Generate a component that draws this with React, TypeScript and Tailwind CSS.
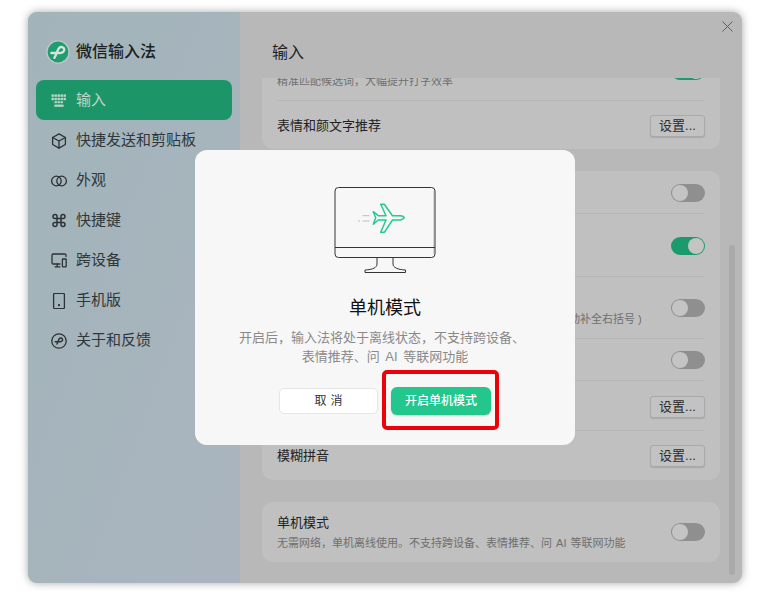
import React from "react";

const FONT = "font-['Liberation_Sans','Noto_Sans_CJK_SC',sans-serif]";

function Toggle({ on = false, className = "" }: { on?: boolean; className?: string }) {
  return on ? (
    <div className={`flex h-[18px] w-[34px] shrink-0 items-center justify-end rounded-full bg-[#1b9a6b] ${className}`}>
      <div className="h-[16px] w-[16px] rounded-full bg-[#c4c4c4] mr-[1px]" />
    </div>
  ) : (
    <div className={`flex h-[18px] w-[34px] shrink-0 items-center rounded-full bg-[#8f8f8f] ${className}`}>
      <div className="h-[16px] w-[16px] rounded-full bg-[#c4c4c4] ml-[1px]" />
    </div>
  );
}

function SetBtn() {
  return (
    <div className="flex h-[22px] w-[55px] shrink-0 items-center justify-center rounded-[3px] border border-[#a9a9a9] bg-[#c2c2c2] text-[13px] text-[#2a2a2a] shadow-[0_1px_1px_rgba(0,0,0,0.12)]">
      设置...
    </div>
  );
}

function Row({ h, border = true, children }: { h: string; border?: boolean; children: React.ReactNode }) {
  return (
    <div className={`flex items-center justify-between ${h} ${border ? "border-b border-[#b6b6b6]" : ""}`}>{children}</div>
  );
}

const stroke = { fill: "none", stroke: "#2c3235", strokeWidth: 1.3, strokeLinecap: "round", strokeLinejoin: "round" } as const;

function KeyboardIcon() {
  return (
    <svg width="16" height="14" viewBox="0 0 16 14" fill="#bcd6c9">
      {[0, 3, 6, 9, 12].map((x) => (
        <rect key={`a${x}`} x={x + 0.5} y="0.4" width="2.4" height="2.4" />
      ))}
      {[0, 3, 6, 9, 12].map((x) => (
        <rect key={`b${x}`} x={x + 0.5} y="3.8" width="2.4" height="2.4" />
      ))}
      {[3, 6, 9].map((x) => (
        <rect key={`c${x}`} x={x + 0.5} y="7.2" width="2.4" height="2" />
      ))}
      <rect x="3.4" y="10.6" width="9.2" height="2.2" />
    </svg>
  );
}
function CubeIcon() {
  return (
    <svg width="16" height="16" viewBox="0 0 16 16" {...stroke}>
      <path d="M8 0.9 14.4 4.5V11.5L8 15.1 1.6 11.5V4.5Z" />
      <path d="M1.6 4.5 8 8 14.4 4.5M8 8V15.1" />
    </svg>
  );
}
function RingsIcon() {
  return (
    <svg width="16" height="12" viewBox="0 0 16 12" {...stroke}>
      <circle cx="5.4" cy="6" r="4.8" />
      <circle cx="10.6" cy="6" r="4.8" />
    </svg>
  );
}
function CmdIcon() {
  return (
    <svg width="17" height="17" viewBox="0 0 24 24" fill="none" stroke="#2c3235" strokeWidth="2.2" strokeLinecap="round" strokeLinejoin="round">
      <path d="M15 6v12a3 3 0 1 0 3-3H6a3 3 0 1 0 3 3V6a3 3 0 1 0-3 3h12a3 3 0 1 0-3-3" />
    </svg>
  );
}
function DevicesIcon() {
  return (
    <svg width="16" height="15" viewBox="0 0 16 15" {...stroke}>
      <path d="M15 3.4V2.2A1.2 1.2 0 0 0 13.8 1H2.2A1.2 1.2 0 0 0 1 2.2V9.8A1.2 1.2 0 0 0 2.2 11H9" />
      <path d="M4 13.8H9M6.2 11V13.8" />
      <rect x="11.4" y="6" width="3.8" height="7.8" rx="0.6" />
    </svg>
  );
}
function PhoneIcon() {
  return (
    <svg width="16" height="16" viewBox="0 0 16 16" {...stroke}>
      <rect x="2.6" y="0.4" width="10.8" height="15.2" rx="1.2" />
      <circle cx="8" cy="12.2" r="0.5" fill="#2c3235" />
    </svg>
  );
}
function AboutIcon() {
  return (
    <svg width="16" height="16" viewBox="0 0 16 16" {...stroke}>
      <circle cx="8" cy="8" r="7.2" />
      <path d="M4.2 8.8H8.8C10.8 8.8 11.8 7.6 11.5 6.4 11.1 5 9.4 4.6 8.4 5.6 7.6 6.4 7.4 8.2 6 11" strokeWidth="1.5" />
    </svg>
  );
}
function Logo() {
  return (
    <svg width="24" height="24" viewBox="0 0 24 24">
      <circle cx="12" cy="12" r="11.8" fill="#bfc6c5" />
      <circle cx="12" cy="12" r="10.4" fill="#1f9d70" />
      <path d="M5.4 13H13C16.4 13 18.6 11.4 18.2 9.2 17.8 7 15 6.2 13.2 7.8 11.4 9.4 11.2 13 8.4 17.8" fill="none" stroke="#d4e3dc" strokeWidth="2.4" strokeLinecap="round" strokeLinejoin="round" />
    </svg>
  );
}

function MonitorArt() {
  return (
    <svg width="102" height="88" viewBox="0 0 102 88" className="block">
      <rect x="1" y="0.5" width="100" height="70" rx="3.5" fill="none" stroke="#343434" strokeWidth="1" />
      <path d="M100.5 4V67" stroke="#8f8f8f" strokeWidth="1.6" />
      <path d="M1 60.5H101" stroke="#343434" strokeWidth="1" />
      <path d="M43 70.5V77C43 80.5 39 82.6 31 83V85.5H71.5V83C63.5 82.6 59 80.5 59 77V70.5" fill="none" stroke="#343434" strokeWidth="1" />
      <path
        d="M70.3 30.7Q69 28.7 66.5 28.7H58.5L50.3 17.3H46.7L52 28.7H44.3L39.3 24.7 41.7 30.7 39.3 37.3 44.3 33H52L46.7 45.3H50.3L58.5 33H66.5Q69 32.7 70.3 30.7Z"
        fill="none"
        stroke="#26c98f"
        strokeWidth="1.5"
        strokeLinejoin="round"
      />
      <path d="M28.5 28.7H35.5M24 34H26M28.5 34H35.5" stroke="#bdbdbd" strokeWidth="1" />
    </svg>
  );
}

const items: [string, React.ReactNode][] = [
  ["快捷发送和剪贴板", <CubeIcon />],
  ["外观", <RingsIcon />],
  ["快捷键", <CmdIcon />],
  ["跨设备", <DevicesIcon />],
  ["手机版", <PhoneIcon />],
  ["关于和反馈", <AboutIcon />],
];

export default function App() {
  return (
    <div className={`relative h-[595px] w-[770px] overflow-hidden bg-white pl-[28px] pt-[12px] ${FONT}`}>
      <div className="relative flex h-[571px] w-[714px] overflow-hidden rounded-[9px] bg-[#b8b8b8] shadow-[0_0_9px_rgba(0,0,0,0.35)]">
        {/* sidebar */}
        <aside className="flex w-[212px] shrink-0 flex-col bg-gradient-to-br from-[#a2b4ba] to-[#aab4bf] px-[8px] pt-[27px] text-[15px] text-[#30373a]">
          <div className="flex h-[24px] items-center gap-[6px] pl-[10px] pt-[1px]">
            <Logo />
            <span className="text-[16px] font-medium text-[#1c1f20]">微信输入法</span>
          </div>
          <div className="mt-[17px] flex h-[40px] items-center gap-[9px] rounded-[8px] bg-[#1c9669] pl-[15px] pt-[1px] text-[#bcd6c9]">
            <span className="flex w-[16px] justify-center"><KeyboardIcon /></span>
            输入
          </div>
          {items.map(([label, icon]) => (
            <div key={label} className="flex h-[40px] items-center gap-[9px] pl-[15px] pt-[1px]">
              <span className="flex w-[16px] justify-center">{icon}</span>
              {label}
            </div>
          ))}
        </aside>

        {/* main */}
        <main className="flex min-w-0 flex-1 flex-col">
          <div className="h-[66px] shrink-0 pl-[32px] pt-[31px] text-[16px] leading-[20px] text-[#1f1f1f]">输入</div>
          <div className="relative flex-1 overflow-hidden pl-[21px] pr-[21px]">
            <div className="-mt-[27px] flex flex-col gap-[20px]">
              <div className="rounded-[12px] border border-[#b8b8b8] bg-[#c0c0c0] px-[15px]">
                <Row h="h-[49px]">
                  <div className="self-end pb-[12px] text-[11px] leading-[14px] text-[#6f6f6f]">精准匹配候选词，大幅提升打字效率</div>
                  <Toggle on className="mb-[10px]" />
                </Row>
                <Row h="h-[48px] pt-[2px]" border={false}>
                  <span className="text-[13px] text-[#222]">表情和颜文字推荐</span>
                  <SetBtn />
                </Row>
              </div>
              <div className="rounded-[12px] border border-[#b8b8b8] bg-[#c0c0c0] px-[15px]">
                <Row h="h-[43px] justify-end pt-[1px]"><Toggle /></Row>
                <Row h="h-[63px] justify-end pt-[2px]"><Toggle on /></Row>
                <Row h="h-[62px] pt-[1px]">
                  <div className="self-end pb-[12px] pl-[292px] text-[11px] leading-[14px] text-[#6f6f6f]">动补全右括号 )</div>
                  <Toggle />
                </Row>
                <Row h="h-[42px] justify-end pt-[1px]"><Toggle /></Row>
                <Row h="h-[50px] justify-end pt-[2px]"><SetBtn /></Row>
                <Row h="h-[49px] pt-[1px]" border={false}>
                  <span className="text-[13px] text-[#222]">模糊拼音</span>
                  <SetBtn />
                </Row>
              </div>
              <div className="flex h-[62px] items-center justify-between rounded-[12px] border border-[#b8b8b8] bg-[#c0c0c0] px-[15px]">
                <div>
                  <div className="text-[13px] leading-[18px] text-[#222]">单机模式</div>
                  <div className="mt-[4px] text-[11px] leading-[14px] text-[#6f6f6f] [word-spacing:1px]">无需网络，单机离线使用。不支持跨设备、表情推荐、问 AI 等联网功能</div>
                </div>
                <Toggle />
              </div>
            </div>
          </div>
          <div className="absolute right-[7px] top-[233px] h-[330px] w-[6px] rounded-full bg-[#a9a9a9]" />
          <svg className="absolute right-[9px] top-[9px]" width="11" height="11" viewBox="0 0 11 11" stroke="#5e5e5e" strokeWidth="1">
            <path d="M0.5 0.5 10.5 10.5M10.5 0.5 0.5 10.5" />
          </svg>
        </main>
      </div>

      {/* dialog */}
      <div className="absolute left-[195px] top-[150px] flex h-[295px] w-[380px] flex-col items-center rounded-[12px] bg-[#f7f7f7] pt-[37px]">
        <MonitorArt />
        <div className="mt-[21px] text-[18px] leading-[24px] text-[#111]">单机模式</div>
        <div className="mt-[8px] text-center text-[13px] leading-[19px] text-[#8a8a8a]">
          <div className="pr-[6px]">开启后，输入法将处于离线状态，不支持跨设备、</div>
          <div className="[word-spacing:2px]">表情推荐、问 AI 等联网功能</div>
        </div>
        <div className="mt-[21px] flex items-center gap-[13px]">
          <div className="flex h-[26px] w-[99px] items-center justify-center rounded-[5px] border border-[#e6e6e6] bg-white pl-[4px] text-[12px] tracking-[4px] text-[#333]">
            取消
          </div>
          <div className="flex h-[28px] w-[100px] items-center justify-center rounded-[6px] bg-[#23c78e] text-[12px] font-medium text-white shadow-[0_1px_2px_rgba(0,0,0,0.15)]">
            开启单机模式
          </div>
        </div>
      </div>

      {/* annotation */}
      <div className="absolute left-[382px] top-[370px] h-[60px] w-[117px] rounded-[5px] border-[4px] border-[#ee0008]" />
    </div>
  );
}
